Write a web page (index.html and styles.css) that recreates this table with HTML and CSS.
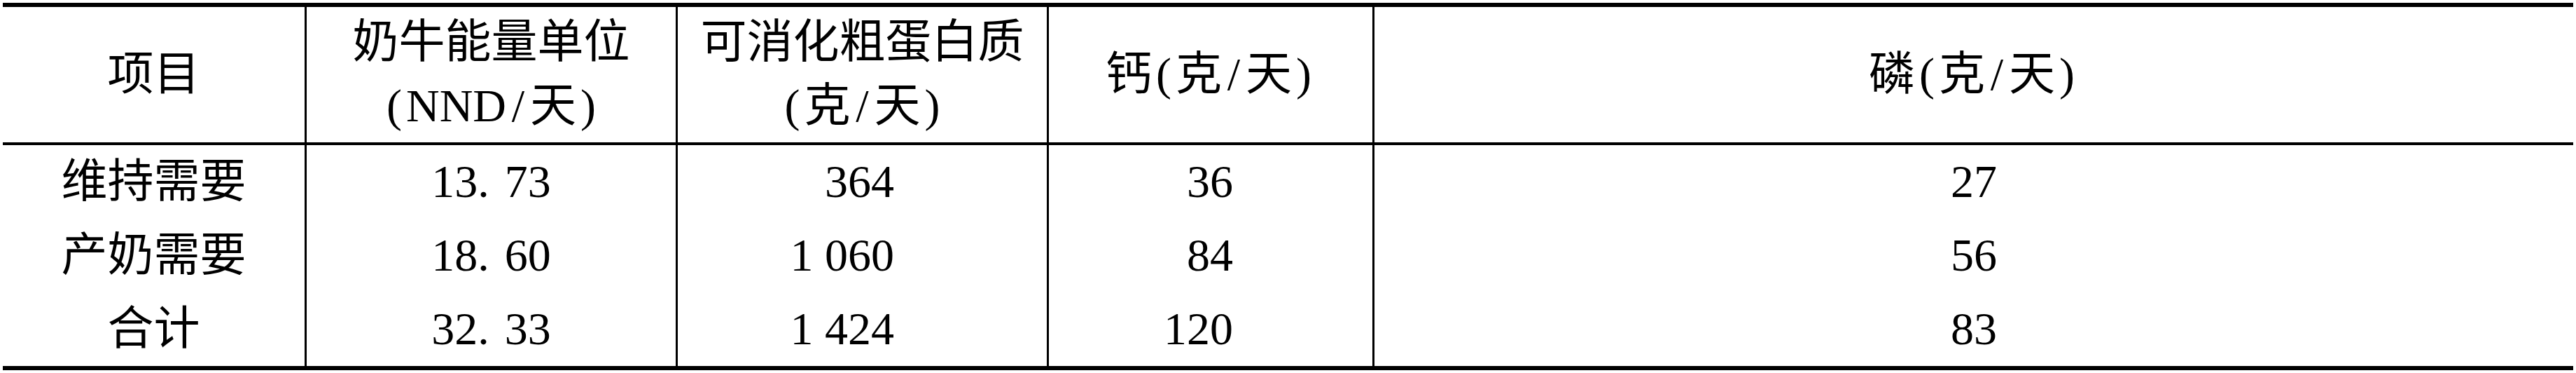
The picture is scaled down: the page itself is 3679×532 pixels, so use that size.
FILE: index.html
```html
<!DOCTYPE html>
<html lang="zh-CN">
<head>
<meta charset="utf-8">
<title>奶牛营养需要</title>
<link rel="stylesheet" href="styles.css">
</head>
<body>
<div class="tbl">
  <div class="cell head"><span class="in">项目</span></div>
  <div class="cell head line"><span class="in">奶牛能量单位<br><span class="p">(</span>NND<span class="p">/</span>天<span class="p">)</span></span></div>
  <div class="cell head line"><span class="in">可消化粗蛋白质<br><span class="p">(</span>克<span class="p">/</span>天<span class="p">)</span></span></div>
  <div class="cell head line"><span class="in">钙<span class="p">(</span>克<span class="p">/</span>天<span class="p">)</span></span></div>
  <div class="cell head line"><span class="in">磷<span class="p">(</span>克<span class="p">/</span>天<span class="p">)</span></span></div>

  <div class="cell"><span class="in">维持需要</span></div>
  <div class="cell line"><span class="in">13<span class="dot">.</span>73</span></div>
  <div class="cell line r3"><span class="in">364</span></div>
  <div class="cell line r4"><span class="in">36</span></div>
  <div class="cell line"><span class="in">27</span></div>

  <div class="cell"><span class="in">产奶需要</span></div>
  <div class="cell line"><span class="in">18<span class="dot">.</span>60</span></div>
  <div class="cell line r3"><span class="in">1 060</span></div>
  <div class="cell line r4"><span class="in">84</span></div>
  <div class="cell line"><span class="in">56</span></div>

  <div class="cell"><span class="in">合计</span></div>
  <div class="cell line"><span class="in">32<span class="dot">.</span>33</span></div>
  <div class="cell line r3"><span class="in">1 424</span></div>
  <div class="cell line r4"><span class="in">120</span></div>
  <div class="cell line"><span class="in">83</span></div>
</div>
</body>
</html>
```

FILE: styles.css
```css
html, body {
  margin: 0;
  padding: 0;
  background: #fff;
}

body {
  font-family: "Liberation Serif", "Noto Sans CJK SC", serif;
  font-size: 66px;
  line-height: 91px;
  color: #000;
}

.tbl {
  display: grid;
  grid-template-columns: 431px 530px 530px 465px 1fr;
  grid-template-rows: 197px 105px 105px 105px;
  width: 3671px;
  margin: 4px 0 0 4px;
  border-top: 6px solid #000;
  border-bottom: 6px solid #000;
}

.cell {
  box-sizing: border-box;
  display: flex;
  align-items: center;
  justify-content: center;
  padding-bottom: 3px;
}

.in {
  display: block;
  text-align: center;
  white-space: nowrap;
}

.head {
  border-bottom: 4px solid #000;
}

.line {
  border-left: 3px solid #000;
}

.r3 {
  justify-content: flex-end;
  padding-right: 218px;
}

.r4 {
  justify-content: flex-end;
  padding-right: 199px;
}

.p {
  display: inline-block;
  width: 34px;
  text-align: center;
}

.dot {
  margin-right: 22px;
}
```
